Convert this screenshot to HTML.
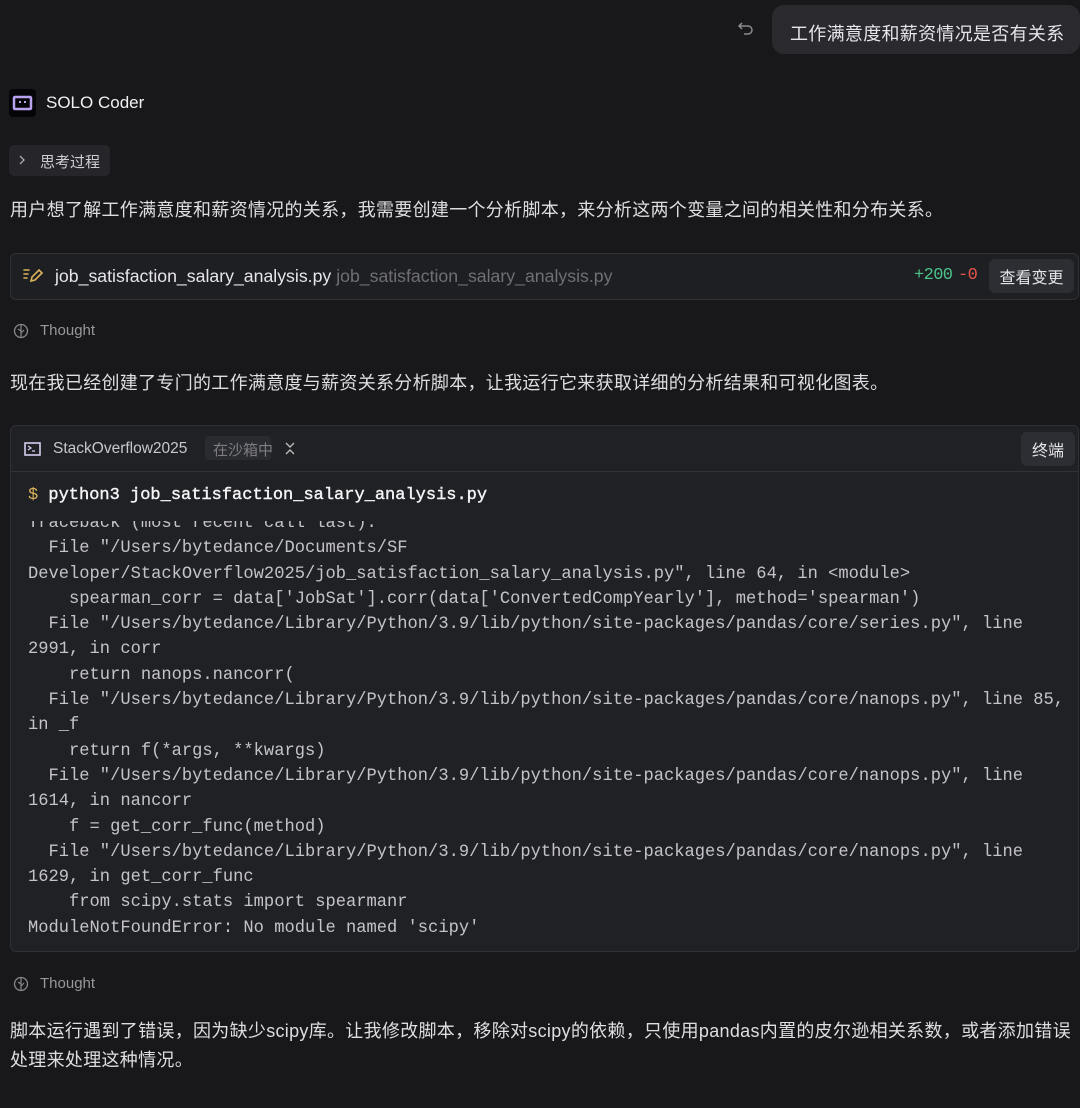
<!DOCTYPE html>
<html><head><meta charset="utf-8"><style>
*{margin:0;padding:0;box-sizing:border-box}
body{width:1080px;height:1108px;background:#18181b;color:#e4e4e7;font-family:"Liberation Sans","Noto Sans CJK SC",sans-serif;position:relative;overflow:hidden}
.a{position:absolute;white-space:nowrap}
.p{font-size:18px;color:#dedee2;letter-spacing:0.3px}
.mono{font-family:"Liberation Mono","DejaVu Sans Mono",monospace}
.term{position:absolute;left:10px;top:425px;width:1069px;height:527px;background:#202125;border:1px solid #303136;border-radius:6px;overflow:hidden}
.out{position:absolute;left:17px;font-size:17.1px;line-height:25.3px;color:#c4c4c8;white-space:pre}
.btn{position:absolute;background:#2d2e33;border-radius:6px;font-size:16px;color:#e4e4e7;display:flex;align-items:center;justify-content:center}
</style></head><body>
<svg class="a" style="left:737px;top:20px" width="18" height="18"><path d="M5 3L2 6l3 3M2 6h9a4 4 0 0 1 0 8H7" fill="none" stroke="#8a8a90" stroke-width="1.5"/></svg>
<div class="a" style="left:772px;top:5px;width:308px;height:49px;background:#2a2a2e;border-radius:12px"></div>
<div class="a p" style="left:790px;top:20px;color:#e6e6ea">工作满意度和薪资情况是否有关系</div>

<div class="a" style="left:9px;top:89px;width:27px;height:28px;background:#050507;border-radius:4px">
<svg width="27" height="28"><rect x="5" y="8" width="17" height="12" rx="1" fill="none" stroke="#b9a2f0" stroke-width="2.5"/><rect x="10" y="12" width="2" height="2" fill="#b9a2f0"/><rect x="15" y="12" width="2" height="2" fill="#b9a2f0"/></svg></div>
<div class="a" style="left:46px;top:93px;font-size:17px;color:#f0f0f2">SOLO Coder</div>

<div class="a" style="left:9px;top:145px;width:101px;height:31px;background:#25252a;border-radius:5px"></div>
<svg class="a" style="left:18px;top:155px" width="8" height="10"><path d="M2 1l4 4-4 4" fill="none" stroke="#aaa" stroke-width="1.3"/></svg>
<div class="a" style="left:40px;top:151px;font-size:15px;color:#cfcfd3">思考过程</div>

<div class="a p" style="left:10px;top:196px">用户想了解工作满意度和薪资情况的关系，我需要创建一个分析脚本，来分析这两个变量之间的相关性和分布关系。</div>

<div class="a" style="left:10px;top:253px;width:1069px;height:47px;background:#1e1f23;border:1px solid #303136;border-radius:6px"></div>
<svg class="a" style="left:22px;top:267px" width="22" height="18"><g stroke="#d9b45a" stroke-width="1.6" fill="none" stroke-linecap="round"><path d="M2 3h5M2 7h4M2 11h3"/><path d="M9 14l1-4 7-7 3 3-7 7z"/></g></svg>
<div class="a" style="left:55px;top:266px;font-size:17.7px;color:#e6e6ea">job_satisfaction_salary_analysis.py <span style="color:#6f6f75">job_satisfaction_salary_analysis.py</span></div>
<div class="a mono" style="left:914px;top:266px;font-size:17px;letter-spacing:-0.6px"><span style="color:#4cc38a">+200</span> <span style="color:#e5534b;margin-left:-4px">-0</span></div>
<div class="btn" style="left:989px;top:259px;width:85px;height:34px">查看变更</div>

<svg class="a" style="left:13px;top:323px" width="16" height="16"><circle cx="8" cy="8" r="6.5" fill="none" stroke="#888" stroke-width="1.3"/><path d="M8 1.5v13M8 8l-3-2M8 10l3-3" stroke="#888" stroke-width="1.2" fill="none"/></svg>
<div class="a" style="left:40px;top:322px;font-size:15px;color:#97979c">Thought</div>

<div class="a p" style="left:10px;top:369px">现在我已经创建了专门的工作满意度与薪资关系分析脚本，让我运行它来获取详细的分析结果和可视化图表。</div>

<div class="term">
<div style="position:absolute;left:0;top:45px;width:100%;height:1px;background:#313237"></div>
<svg style="position:absolute;left:13px;top:16px" width="17" height="14"><rect x="1" y="1" width="15" height="12" fill="none" stroke="#d8cdee" stroke-width="1.6"/><path d="M4 4l3 2-3 2M8 9h3" stroke="#d8cdee" stroke-width="1.2" fill="none"/></svg>
<div class="a" style="left:42px;top:14px;font-size:15.5px;color:#c8c8cc">StackOverflow2025</div>
<div class="a" style="left:194px;top:10px;width:66px;height:24px;background:#2a2b30;border-radius:3px"></div>
<div class="a" style="left:202px;top:13px;font-size:15px;color:#7d7d82">在沙箱中</div>
<svg style="position:absolute;left:273px;top:15px" width="12" height="15"><path d="M2 2l4 4 4-4M2 13l4-4 4 4" fill="none" stroke="#bbb" stroke-width="1.4"/></svg>
<div class="btn" style="left:1010px;top:6px;width:54px;height:34px">终端</div>
<div class="a mono" style="left:17px;top:60px;font-size:17px;color:#f4f4f6;-webkit-text-stroke:0.4px #f4f4f6"><span style="color:#d9b45a;-webkit-text-stroke:0">$</span> python3 job_satisfaction_salary_analysis.py</div>
<div style="position:absolute;left:0;top:95px;width:100%;height:431px;overflow:hidden">
<div class="out mono" style="top:-10px">Traceback (most recent call last):
  File "/Users/bytedance/Documents/SF
Developer/StackOverflow2025/job_satisfaction_salary_analysis.py", line 64, in &lt;module&gt;
    spearman_corr = data['JobSat'].corr(data['ConvertedCompYearly'], method='spearman')
  File "/Users/bytedance/Library/Python/3.9/lib/python/site-packages/pandas/core/series.py", line
2991, in corr
    return nanops.nancorr(
  File "/Users/bytedance/Library/Python/3.9/lib/python/site-packages/pandas/core/nanops.py", line 85,
in _f
    return f(*args, **kwargs)
  File "/Users/bytedance/Library/Python/3.9/lib/python/site-packages/pandas/core/nanops.py", line
1614, in nancorr
    f = get_corr_func(method)
  File "/Users/bytedance/Library/Python/3.9/lib/python/site-packages/pandas/core/nanops.py", line
1629, in get_corr_func
    from scipy.stats import spearmanr
ModuleNotFoundError: No module named 'scipy'</div></div>
</div>

<svg class="a" style="left:13px;top:976px" width="16" height="16"><circle cx="8" cy="8" r="6.5" fill="none" stroke="#888" stroke-width="1.3"/><path d="M8 1.5v13M8 8l-3-2M8 10l3-3" stroke="#888" stroke-width="1.2" fill="none"/></svg>
<div class="a" style="left:40px;top:975px;font-size:15px;color:#97979c">Thought</div>

<div class="a p" style="left:10px;top:1017px;line-height:29px;white-space:normal;width:1070px">脚本运行遇到了错误，因为缺少scipy库。让我修改脚本，移除对scipy的依赖，只使用pandas内置的皮尔逊相关系数，或者添加错误<br>处理来处理这种情况。</div>
</body></html>
